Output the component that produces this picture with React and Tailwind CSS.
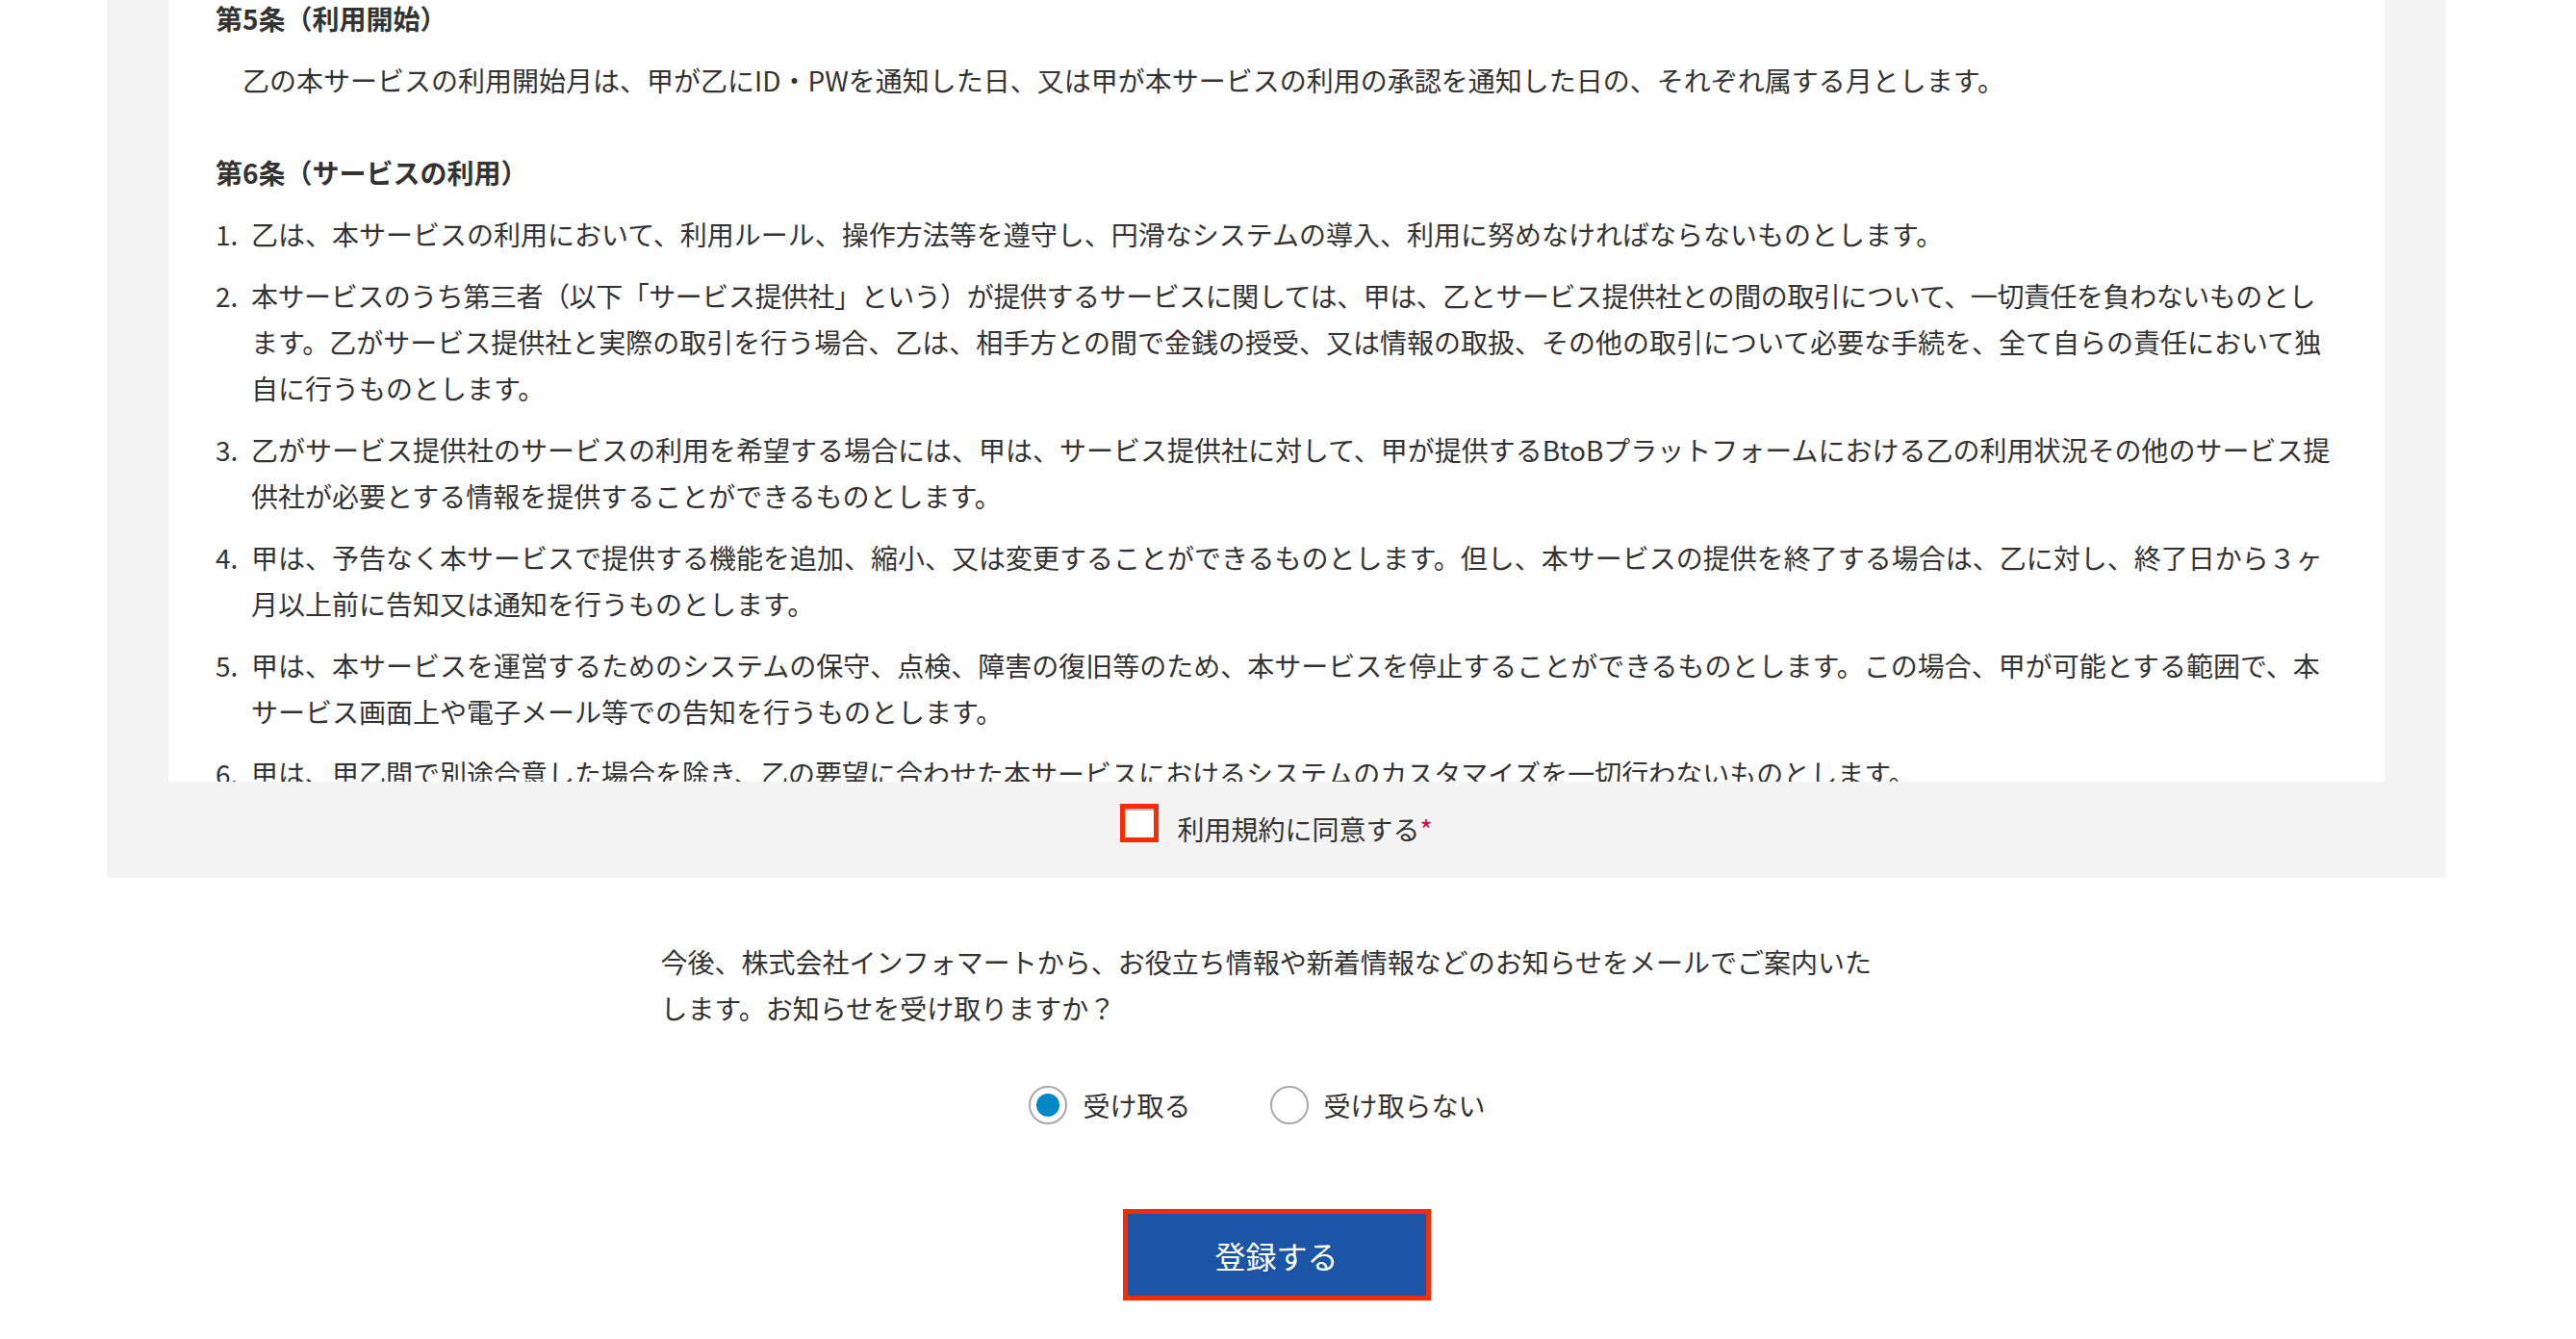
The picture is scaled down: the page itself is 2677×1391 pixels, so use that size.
import React from 'react';

// each entry is one rendered line, broken where the original wraps
const articleItems = [
  ['乙は、本サービスの利用において、利用ルール、操作方法等を遵守し、円滑なシステムの導入、利用に努めなければならないものとします。'],
  [
    '本サービスのうち第三者（以下「サービス提供社」という）が提供するサービスに関しては、甲は、乙とサービス提供社との間の取引について、一切責任を負わないものとし',
    'ます。乙がサービス提供社と実際の取引を行う場合、乙は、相手方との間で金銭の授受、又は情報の取扱、その他の取引について必要な手続を、全て自らの責任において独',
    '自に行うものとします。',
  ],
  [
    '乙がサービス提供社のサービスの利用を希望する場合には、甲は、サービス提供社に対して、甲が提供するBtoBプラットフォームにおける乙の利用状況その他のサービス提',
    '供社が必要とする情報を提供することができるものとします。',
  ],
  [
    '甲は、予告なく本サービスで提供する機能を追加、縮小、又は変更することができるものとします。但し、本サービスの提供を終了する場合は、乙に対し、終了日から３ヶ',
    '月以上前に告知又は通知を行うものとします。',
  ],
  [
    '甲は、本サービスを運営するためのシステムの保守、点検、障害の復旧等のため、本サービスを停止することができるものとします。この場合、甲が可能とする範囲で、本',
    'サービス画面上や電子メール等での告知を行うものとします。',
  ],
  ['甲は、甲乙間で別途合意した場合を除き、乙の要望に合わせた本サービスにおけるシステムのカスタマイズを一切行わないものとします。'],
];

const Radio = ({ checked, children }) => (
  <label className="flex items-center gap-[16px] mr-[40px] cursor-pointer">
    <span className="w-[40px] h-[40px] rounded-full border-2 border-[#a9a9a9] bg-white flex items-center justify-center shrink-0">
      {checked && <span className="w-[24px] h-[24px] rounded-full bg-[#0088c6]" />}
    </span>
    <span>{children}</span>
  </label>
);

export default function App() {
  return (
    <div className="min-h-[1391px] bg-white text-[#333] text-[28px] leading-[48px] font-['Hiragino_Sans','Noto_Sans_CJK_JP',sans-serif]">
      <div className="ml-[111px] w-[2431px]">
        {/* 利用規約 */}
        <section className="bg-[#f4f4f4] px-[64px] pb-[27px]">
          <div className="h-[812px] overflow-hidden bg-white pl-[49px]">
            <div className="-mt-[5px]">
              <h3 className="font-bold mb-[16px]">第5条（利用開始）</h3>
              <p className="mb-[48px] whitespace-nowrap">
                {'\u3000'}乙の本サービスの利用開始月は、甲が乙にID・PWを通知した日、又は甲が本サービスの利用の承認を通知した日の、それぞれ属する月とします。
              </p>
              <h3 className="font-bold mb-[16px]">第6条（サービスの利用）</h3>
              <ol className="flex flex-col gap-[16px]">
                {articleItems.map((lines, i) => (
                  <li key={i} className="flex">
                    <span className="w-[37px] shrink-0">{i + 1}.</span>
                    <div>
                      {lines.map((line, j) => (
                        <span
                          key={j}
                          className={`block whitespace-nowrap ${i === 1 && j === 0 ? 'tracking-[-0.45px]' : ''}`}
                        >
                          {line}
                        </span>
                      ))}
                    </div>
                  </li>
                ))}
              </ol>
            </div>
          </div>
          <div className="flex justify-center items-start pt-[23px]">
            <span className="w-[40px] h-[40px] border-[5px] border-[#ff2a00] bg-white shrink-0">
              <span className="block h-[2px] bg-[#b5b5b5]" />
            </span>
            <span className="ml-[19px] mt-[2px]">
              利用規約に同意する<span className="text-[#e6003c]">*</span>
            </span>
          </div>
        </section>

        {/* お知らせ */}
        <p className="w-[1280px] mx-auto mt-[63px]">
          今後、株式会社インフォマートから、お役立ち情報や新着情報などのお知らせをメールでご案内いた
          <br />
          します。お知らせを受け取りますか？
        </p>

        <div className="flex justify-center gap-[42px] mt-[53px]">
          <Radio checked>受け取る</Radio>
          <Radio>受け取らない</Radio>
        </div>

        <button className="block mx-auto mt-[84px] w-[320px] h-[95px] border-[5px] border-[#ff2a00] bg-[#1c55a5] text-white text-[32px]">
          登録する
        </button>
      </div>
    </div>
  );
}
